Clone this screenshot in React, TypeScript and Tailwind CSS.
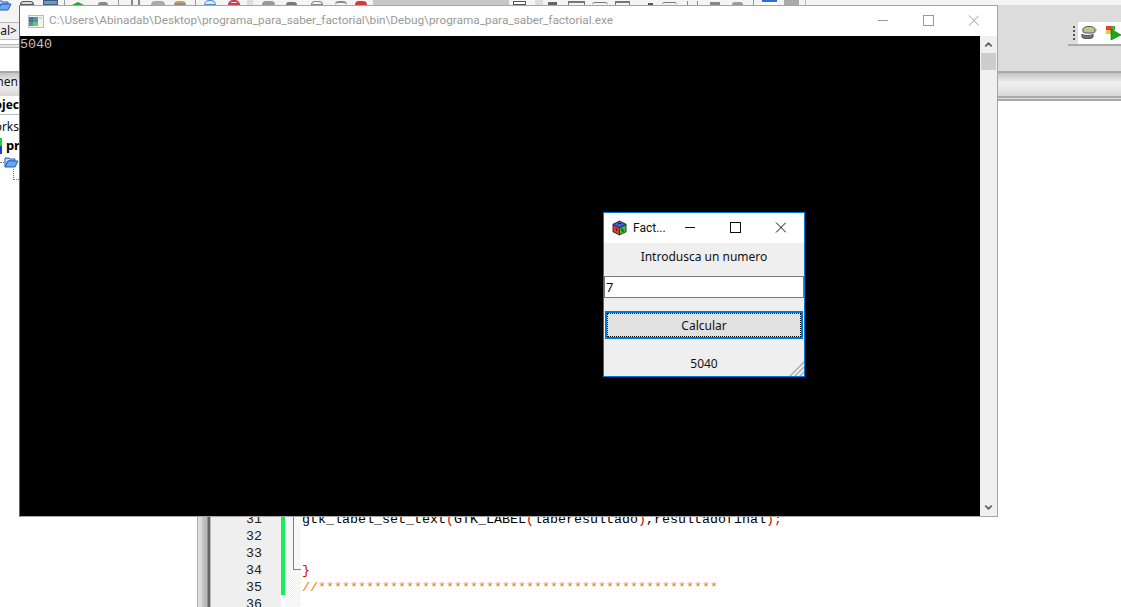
import * as React from "react";
import { ChevronDown, ChevronUp } from "lucide-react";

const ui = "font-['Noto_Sans',sans-serif]";
const title = "font-['Roboto',sans-serif]";
const mono = "font-['Liberation_Mono',monospace]";

function CodeRow({ n, children }: { n: number; children?: React.ReactNode }) {
	return (
		<div className={`flex h-[17px] items-center text-[13.33px] leading-[17px] ${mono}`}>
			<div className="w-[51px] text-right text-[#222]">{n}</div>
			<div className="ml-[40px] whitespace-pre">{children}</div>
		</div>
	);
}

function ToolbarStrip() {
	return (
		<div className="flex h-[5px] items-end overflow-hidden bg-[#f4f4f4]">
			<div className="ml-[1px] h-[4px] w-[14px] rounded-t-sm border border-[#555] bg-[#ddd]" />
			<div className="ml-[9px] h-[5px] w-[15px] border border-[#3a5a8a] bg-[#7a94bc]" />
			<div className="ml-[6px] h-[5px] w-px bg-[#999]" />
			<div className="ml-[7px] h-[3px] w-[12px] border-x-[6px] border-b-[3px] border-x-transparent border-b-[#2aa52a]" />
			<div className="ml-[14px] h-[3px] w-[10px] rounded-t-md bg-[#888]" />
			<div className="ml-[10px] h-[5px] w-px bg-[#999]" />
			<div className="ml-[12px] h-[5px] w-[9px] border-x-2 border-x-[#888]" />
			<div className="ml-[11px] h-[4px] w-[14px] rounded-t-sm bg-[#aaa]" />
			<div className="ml-[9px] h-[4px] w-[12px] rounded-t-md border-t-2 border-[#c9a24a] bg-[#8a8fa0]" />
			<div className="ml-[9px] h-[5px] w-px bg-[#999]" />
			<div className="ml-[8px] h-[5px] w-[12px] rounded-t-full border border-[#5b8fc9] bg-[#d8e8f8]" />
			<div className="ml-[12px] h-[5px] w-[12px] rounded-t-full border-2 border-[#c84050] bg-[#eee]" />
			<div className="ml-[7px] h-[5px] w-[6px] bg-[#ddd]" />
			<div className="ml-[9px] h-[4px] w-[13px] rounded-t-md bg-[#999]" />
			<div className="ml-[11px] h-[3px] w-[11px] rounded-t-sm bg-[#777]" />
			<div className="ml-[14px] h-[4px] w-[12px] rounded-t-md border border-[#888]" />
			<div className="ml-[12px] h-[4px] w-[12px] rounded-t-md border-t-2 border-[#888]" />
			<div className="ml-[8px] h-[4px] w-[12px] rounded-t-sm bg-[#d83a3a]" />
			<div className="ml-[6px] h-[5px] w-[136px] bg-[#c8c8c8]" />
			<div className="ml-[4px] h-[4px] w-[13px] border border-[#555] bg-white" />
			<div className="ml-[9px] h-[5px] w-[8px] bg-[#ddd]" />
			<div className="ml-[5px] h-[3px] w-[9px] bg-[#666]" />
			<div className="ml-[11px] h-[4px] w-[17px] border-x border-t-2 border-[#777]" />
			<div className="ml-[7px] h-[3px] w-[16px] rounded-t-md border-t border-[#777]" />
			<div className="ml-[7px] h-[4px] w-[15px] border-x border-t-2 border-[#777]" />
			<div className="ml-[18px] h-[2px] w-[5px] bg-[#555]" />
			<div className="ml-[9px] h-[3px] w-[15px] rounded-t-md border-t border-[#777]" />
			<div className="ml-[10px] h-[4px] w-[11px] border-x border-[#888]" />
			<div className="ml-[12px] h-[3px] w-[10px] bg-[#888]" />
			<div className="ml-[12px] h-[3px] w-[11px] rounded-t-sm bg-[#999]" />
			<div className="ml-[10px] h-[5px] w-px bg-[#999]" />
			<div className="ml-[8px] h-[5px] w-[15px] border-t-2 border-[#2a6fd0] bg-white" />
			<div className="ml-[7px] h-[5px] w-[15px] bg-[#aaa]" />
			<div className="ml-[6px] h-[5px] w-px bg-[#bbb]" />
		</div>
	);
}

function GtkIcon() {
	return (
		<svg width="15" height="16" viewBox="0 0 15 16" className="shrink-0">
			<path d="M7.5 0.5 14.5 4v8l-7 3.5L0.5 12V4z" fill="#333" />
			<path d="M7.5 1.5 13 4.5 7.5 7 2 4.5z" fill="#3a62e8" />
			<path d="M1.5 5.5 7 8v6.3L1.5 11.5z" fill="#f0342c" />
			<path d="M8 8l5.5-2.5v6L8 14.3z" fill="#2cc83a" />
			<path d="M6 3.5h3M4 8l1 3M10 8v3h2" stroke="#222" strokeWidth="1" fill="none" />
		</svg>
	);
}

function ConsoleIcon() {
	return (
		<svg width="16" height="13" viewBox="0 0 16 13" className="shrink-0">
			<rect width="16" height="13" fill="#b8bcbc" />
			<rect x="1" y="1" width="14" height="11" fill="#f2f4f4" />
			<rect x="1" y="2" width="9" height="9" fill="#4f9a8a" />
			<rect x="1" y="2" width="4" height="5" fill="#3f78a8" />
			<rect x="5" y="7" width="5" height="4" fill="#84b878" />
			<rect x="11" y="2" width="3" height="2" fill="#c8d8d8" />
		</svg>
	);
}

function FolderIcon({ className }: { className?: string }) {
	return (
		<svg width="15" height="12" viewBox="0 0 15 12" className={className}>
			<path d="M1 2h4l1 1h5v2H4L1 11z" fill="#bcd6f5" stroke="#1f5fc0" />
			<path d="M1 11l3-6h10l-3 6z" fill="#6aa8ee" stroke="#1f5fc0" />
		</svg>
	);
}

function WinControls({ color }: { color: string }) {
	return (
		<svg width="101" height="11" viewBox="0 0 101 11" className="shrink-0" stroke={color} fill="none">
			<path d="M0 5.5h10" />
			<rect x="45.5" y="0.5" width="10" height="10" />
			<path d="M91 0.5l10 10M101 0.5l-10 10" />
		</svg>
	);
}

function ConsoleWindow() {
	return (
		<div className="absolute left-[19px] top-[5px] flex h-[512px] w-[979px] flex-col border border-[#a6a6a6] border-l-[#666] bg-white">
			<div className="flex h-[30px] shrink-0 items-center">
				<div className="ml-[8px]">
					<ConsoleIcon />
				</div>
				<div className={`ml-[5px] w-[800px] whitespace-nowrap text-[11.8px] text-[#999] ${title}`}>
					C:\Users\Abinadab\Desktop\programa_para_saber_factorial\bin\Debug\programa_para_saber_factorial.exe
				</div>
				<div className="absolute left-[858px] top-[9px]">
					<WinControls color="#999" />
				</div>
			</div>
			<div className="flex min-h-0 flex-1">
				<div className={`flex-1 bg-black pt-px text-[13.33px] leading-[16px] text-[#c0c0c0] ${mono}`}>
					5040
				</div>
				<div className="flex w-[17px] flex-col items-center bg-[#f0f0f0]">
					<ChevronUp className="mt-[3px] h-[11px] w-[11px] text-[#606060]" strokeWidth={4} />
					<div className="mt-[3px] h-[17px] w-[15px] bg-[#cdcdcd]" />
					<div className="flex-1" />
					<ChevronDown className="mb-[3px] h-[11px] w-[11px] text-[#606060]" strokeWidth={4} />
				</div>
			</div>
		</div>
	);
}

function Dialog() {
	return (
		<div className={`absolute left-[603px] top-[212px] flex h-[165px] w-[202px] flex-col border border-[#0078d7] bg-[#efefef] text-[12px] text-[#111] ${ui}`}>
			<div className="relative flex h-[30px] shrink-0 items-center bg-white pl-[8px]">
				<GtkIcon />
				<span className={`ml-[6px] ${title}`}>Fact...</span>
				<div className="absolute left-[81px] top-[9px]">
					<WinControls color="#111" />
				</div>
			</div>
			<div className="flex h-[27px] shrink-0 items-center justify-center">Introdusca un numero</div>
			<div className="mt-[6px] h-[22px] shrink-0 border border-[#7a7a7a] bg-white pl-[1px] text-[13px] leading-[21px]">7</div>
			<div className="mx-[1px] mt-[13px] flex h-[28px] shrink-0 items-center justify-center border-2 border-[#0078d7] bg-[#e1e1e1] pt-[2px] outline-1 -outline-offset-3 outline-dotted outline-black">
				Calcular
			</div>
			<div className="flex flex-1 items-center justify-center pt-[13px]">5040</div>
			<svg width="15" height="15" viewBox="0 0 15 15" className="absolute bottom-0 right-0" stroke="#a9a9a9" strokeWidth="1.4">
				<path d="M1 15 15 1M6 15l9-9M11 15l4-4" />
			</svg>
		</div>
	);
}

export default function App() {
	return (
		<div className={`relative h-[607px] w-[1121px] overflow-hidden bg-white ${ui}`}>
			{/* IDE sitting behind the two windows */}
			<div className="flex h-[71px]">
				<div className="flex w-[19px] shrink-0 flex-col overflow-hidden bg-white">
					<div className="h-[22px] bg-[#f4f4f4]">
						<FolderIcon className="-ml-[3px] -mt-[1px]" />
					</div>
					<div className="flex h-[18px] items-center justify-end overflow-hidden border-y border-[#bbb] bg-[#eee] pr-[2px] text-[12px] text-[#111]">
						al&gt;
					</div>
					<div className="mt-[4px] h-[4px] border-y border-[#bbb] bg-[#e4e4e4]" />
				</div>
				<div className="flex flex-1 flex-col bg-[#dcdcdc]">
					<ToolbarStrip />
					<div className="mt-[17px] flex h-[24px] w-[53px] items-center self-end border-b-2 border-[#aaa] bg-white">
						<div className="flex h-full w-[10px] flex-col items-center justify-center gap-[2px] bg-[#ddd] pl-px">
							<div className="h-[2px] w-[2px] bg-[#555]" />
							<div className="h-[2px] w-[2px] bg-[#555]" />
							<div className="h-[2px] w-[2px] bg-[#555]" />
							<div className="h-[2px] w-[2px] bg-[#555]" />
						</div>
						<svg width="16" height="15" viewBox="0 0 16 15" className="ml-[3px]">
							<ellipse cx="8" cy="3" rx="6" ry="2.5" fill="#d8c860" stroke="#555" />
							<path d="M2 3v3c0 1.5 12 1.5 12 0V3" fill="#bbb" stroke="#555" />
							<path d="M1 8v3c0 2 11 2 11 0V8c0 2-11 2-11 0z" fill="#777" stroke="#444" />
							<path d="M14 4h2" stroke="#999" />
						</svg>
						<svg width="15" height="14" viewBox="0 0 15 14" className="ml-[9px]">
							<rect x="0" y="0" width="5" height="4" fill="#e04030" />
							<rect x="5" y="0" width="4" height="4" fill="#40b040" />
							<rect x="0" y="4" width="5" height="4" fill="#e8c840" />
							<path d="M5 3l10 6-10 5z" fill="#18a818" stroke="#0a6a0a" strokeWidth="0.6" />
						</svg>
					</div>
				</div>
			</div>
			{/* tab band */}
			<div className="flex h-[30px] flex-col border-t-2 border-[#a8a8a8] bg-[linear-gradient(#c4c4c4,#f0f0f0_35%,#e4e4e4_60%,#cfcfcf)]">
				<div className="flex h-[17px] w-[19px] items-center justify-end overflow-hidden pr-px text-[12px] text-[#111]">
					emen
				</div>
				<div className="flex-1" />
				<div className="h-[5px] border-y-2 border-[#aaa] bg-[#ddd]" />
			</div>
			<div className="flex">
				<div className="w-[197px] shrink-0">
					<div className="-mt-[5px] flex h-[19px] w-[19px] items-center justify-end overflow-hidden border-b border-[#bbb] bg-white text-[12px] font-bold text-black">
						ojec
					</div>
					<div className="mt-[4px] flex h-[16px] w-[19px] items-center justify-end overflow-hidden text-[12px] text-[#111]">
						orks
					</div>
					<div className="mt-[2px] flex h-[18px] w-[19px] items-center text-[13px] font-bold text-black">
						<div className="h-[16px] w-[2px] bg-[linear-gradient(#22d030_50%,#2040c0_50%)]" />
						<span className="ml-[4px] overflow-hidden">pr</span>
					</div>
					<div className="flex h-[14px] w-[19px] items-center overflow-hidden">
						<div className="h-px w-[5px] border-t border-dotted border-[#777]" />
						<FolderIcon className="shrink-0" />
					</div>
					<div className="ml-[13px] h-[11px] w-[6px] border-b border-l border-dotted border-[#777]" />
				</div>
				<div className="h-[506px] w-[14px] shrink-0 bg-[linear-gradient(90deg,#aaa_0,#aaa_1px,#e0e0e0_1px,#d8d8d8_5px,#c0c0c0_6px,#b8b8b8_10px,#666_11px,#666_13px,#bbb_13px)]" />
				<div className="relative flex-1">
					<div className="absolute bottom-0 left-0 top-0 w-[70px] bg-[#efefef]" />
					<div className="absolute left-[70px] top-0 h-[494px] w-[4px] bg-[#15f055]" />
					<div className="absolute bottom-0 left-[74px] top-0 w-[16px] bg-[repeating-conic-gradient(#f0f0f0_0_25%,#fff_0_50%)] bg-[length:2px_2px]" />
					<div className="absolute left-[82px] top-0 h-[469px] w-[8px] border-b border-l border-[#808080]" />
					<div className="relative pt-[410px]">
						<CodeRow n={31}>
							<span className="text-black">gtk_label_set_text</span>
							<span className="text-[#e00000]">(</span>
							<span className="text-black">GTK_LABEL</span>
							<span className="text-[#e00000]">(</span>
							<span className="text-black">laberesultado</span>
							<span className="text-[#e00000]">)</span>
							<span className="text-black">,resultadofinal</span>
							<span className="text-[#e00000]">);</span>
						</CodeRow>
						<CodeRow n={32} />
						<CodeRow n={33} />
						<CodeRow n={34}>
							<span className="text-[#e00000]">{"}"}</span>
						</CodeRow>
						<CodeRow n={35}>
							<span className="text-[#f08000]">{"//" + "*".repeat(50)}</span>
						</CodeRow>
						<CodeRow n={36} />
					</div>
				</div>
			</div>
			<ConsoleWindow />
			<Dialog />
		</div>
	);
}
